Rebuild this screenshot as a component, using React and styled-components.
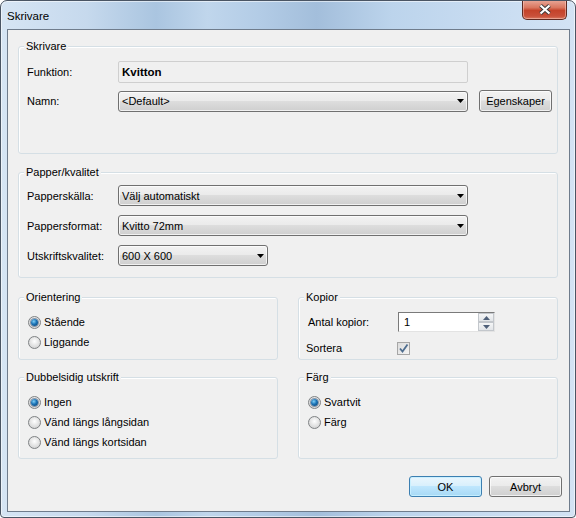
import React from "react";
import styled, { createGlobalStyle } from "styled-components";

const GlobalStyle = createGlobalStyle`
  html, body {
    margin: 0;
    padding: 0;
    background: #ffffff;
  }
  body {
    font-family: "Liberation Sans", Arial, sans-serif;
    font-size: 11px;
    color: #000;
  }
  * {
    box-sizing: border-box;
  }
`;

// Window chrome
const Window = styled.div`
  position: relative;
  width: 576px;
  height: 518px;
  display: flex;
  flex-direction: column;
  border: 1px solid #4a5564;
  border-radius: 7px 7px 4px 4px;
  overflow: hidden;
  background: linear-gradient(
    90deg,
    #d6e5f4 0%,
    #c6d9ed 15%,
    #aac5e0 27%,
    #c0d6ec 36%,
    #b3cce6 45%,
    #a3bedb 55%,
    #bcd4ec 68%,
    #c8dcf1 85%,
    #d3e3f4 100%
  );
  box-shadow: inset 0 0 0 1px rgba(255, 255, 255, 0.55);
`;

const TitleBar = styled.div`
  height: 28px;
  display: flex;
  align-items: center;
  padding: 1px 0 0 6px;
`;

const Title = styled.span`
  font-size: 11.5px;
  color: #000;
`;

const CloseButton = styled.div`
  position: absolute;
  top: -1px;
  right: 8px;
  width: 45px;
  height: 20px;
  border: 1px solid #5e2a22;
  border-top: none;
  border-radius: 0 0 5px 5px;
  background: linear-gradient(
    180deg,
    #e9a99a 0%,
    #d9765f 40%,
    #c4432a 55%,
    #c9503a 85%,
    #d97a60 100%
  );
  box-shadow: inset 0 0 0 1px rgba(255, 220, 210, 0.45);
  display: flex;
  align-items: center;
  justify-content: center;
`;

const Client = styled.div`
  flex: 1;
  margin: 0 5px 5px 6px;
  border: 1px solid #6f7c8c;
  background: #f0f0f0;
  padding: 16px 7px 0 10px;
  display: flex;
  flex-direction: column;
`;

// Group boxes
const Group = styled.div`
  position: relative;
  width: ${(p) => p.$width || 540}px;
  height: ${(p) => p.$height}px;
  margin-top: ${(p) => p.$top || 0}px;
  border: 1px solid #d5dfe5;
  border-radius: 3px;
  box-shadow: inset 1px 1px 0 #ffffff;
  padding: ${(p) => p.$pad || "14px 8px 0 8px"};
`;

const Legend = styled.span`
  position: absolute;
  top: -8px;
  left: 5px;
  padding: 0 2px;
  line-height: 14px;
  background: #f0f0f0;
  color: #000;
`;

const Row = styled.div`
  display: flex;
  gap: 20px;
  margin-top: ${(p) => p.$top || 0}px;
`;

const FormGrid = styled.div`
  display: grid;
  grid-template-columns: ${(p) => p.$cols};
  grid-auto-rows: ${(p) => p.$rowH}px;
  column-gap: ${(p) => p.$colGap || 0}px;
  row-gap: ${(p) => p.$rowGap}px;
  align-items: center;
`;

const Label = styled.span`
  margin-left: ${(p) => p.$indent || 0}px;
  white-space: nowrap;
`;

const ReadOnlyBox = styled.div`
  height: 22px;
  border: 1px solid #cfcfcf;
  border-radius: 2px;
  background: #f0f0f0;
  display: flex;
  align-items: center;
  padding-left: 3px;
  font-weight: bold;
  font-size: 11.5px;
`;

const Combo = styled.div`
  position: relative;
  height: 21px;
  width: ${(p) => p.$width || 350}px;
  border: 1px solid #707070;
  border-radius: 3px;
  background: linear-gradient(
    180deg,
    #f2f2f2 0%,
    #ebebeb 45%,
    #dddddd 50%,
    #cfcfcf 100%
  );
  box-shadow: inset 0 0 0 1px rgba(255, 255, 255, 0.7);
  display: flex;
  align-items: center;
  justify-content: space-between;
  padding: 0 3px 0 3px;
`;

const Arrow = () => (
  <svg width="7" height="4" viewBox="0 0 7 4">
    <polygon points="0,0 7,0 3.5,4" fill="#000" />
  </svg>
);

const PushButton = styled.div`
  width: 73px;
  height: ${(p) => p.$h || 21}px;
  border: 1px solid ${(p) => (p.$default ? "#3c7fb1" : "#707070")};
  border-radius: 3px;
  background: ${(p) =>
    p.$default
      ? "linear-gradient(180deg, #eaf6fd 0%, #d9f0fc 45%, #bee6fd 50%, #a7d9f5 100%)"
      : "linear-gradient(180deg, #f2f2f2 0%, #ebebeb 45%, #dddddd 50%, #cfcfcf 100%)"};
  box-shadow: inset 0 0 0 1px
    ${(p) => (p.$default ? "rgba(200, 240, 255, 0.9)" : "rgba(255, 255, 255, 0.7)")};
  display: flex;
  align-items: center;
  justify-content: center;
`;

const Buttons = styled.div`
  display: flex;
  justify-content: flex-end;
  gap: 7px;
  margin-top: 17px;
`;

// Radio / checkbox / spin
const OptionList = styled.div`
  display: flex;
  flex-direction: column;
`;

const Option = styled.div`
  display: flex;
  align-items: center;
  gap: 3px;
  height: 20px;
`;

const RadioCircle = styled.span`
  position: relative;
  width: 13px;
  height: 13px;
  border-radius: 50%;
  border: 1px solid #7f8284;
  background: radial-gradient(circle at 50% 40%, #ffffff 0%, #e6e6e6 45%, #c9cacb 100%);
  display: flex;
  align-items: center;
  justify-content: center;

  &::after {
    content: "";
    display: ${(p) => (p.$checked ? "block" : "none")};
    width: 7px;
    height: 7px;
    border-radius: 50%;
    background: radial-gradient(circle at 40% 35%, #7fd0f7 0%, #1b72b5 45%, #083c6c 100%);
    box-shadow: 0 0 0 1px rgba(20, 50, 90, 0.45);
  }
`;

const Radio = ({ checked, children }) => (
  <Option>
    <RadioCircle $checked={checked} />
    <span>{children}</span>
  </Option>
);

const SpinBox = styled.div`
  width: 97px;
  height: 20px;
  border: 1px solid;
  border-color: #7a7a7a #e3e3e3 #e3e3e3 #7a7a7a;
  background: #fff;
  display: flex;
  align-items: center;
  justify-content: space-between;
  padding-left: 5px;
`;

const SpinButtons = styled.div`
  display: flex;
  flex-direction: column;
  width: 16px;
  height: 18px;
`;

const SpinHalf = styled.div`
  flex: 1;
  border: 1px solid #c3c7cc;
  background: linear-gradient(180deg, #f5f6f7, #e2e5e8);
  display: flex;
  align-items: center;
  justify-content: center;
`;

const CheckBox = styled.div`
  width: 13px;
  height: 13px;
  margin-left: -1px;
  border: 1px solid #a6a6a6;
  background: linear-gradient(135deg, #dcdcdc, #f4f4f4);
  display: flex;
  align-items: center;
  justify-content: center;
`;

const App = () => {
  return (
    <>
      <GlobalStyle />
      <Window>
        <TitleBar>
          <Title>Skrivare</Title>
        </TitleBar>
        <CloseButton>
          <svg width="14" height="11" viewBox="0 0 14 11">
            <path d="M2.5 1.5 L11.5 9.5 M11.5 1.5 L2.5 9.5" stroke="#3b3b3b" strokeWidth="4" />
            <path d="M2.5 1.5 L11.5 9.5 M11.5 1.5 L2.5 9.5" stroke="#ffffff" strokeWidth="2.2" />
          </svg>
        </CloseButton>
        <Client>
          <Group $height={108}>
            <Legend>Skrivare</Legend>
            <FormGrid $cols="91px 350px 73px" $rowH={22} $rowGap={7} $colGap={0}>
              <Label>Funktion:</Label>
              <ReadOnlyBox>Kvitton</ReadOnlyBox>
              <span />
              <Label>Namn:</Label>
              <Combo>
                <span>&lt;Default&gt;</span>
                <Arrow />
              </Combo>
              <PushButton $h={22} style={{ marginLeft: 11 }}>
                Egenskaper
              </PushButton>
            </FormGrid>
          </Group>

          <Group $height={106} $top={18} $pad="12px 8px 0 8px">
            <Legend>Papper/kvalitet</Legend>
            <FormGrid $cols="91px 350px" $rowH={21} $rowGap={9}>
              <Label>Papperskälla:</Label>
              <Combo>
                <span>Välj automatiskt</span>
                <Arrow />
              </Combo>
              <Label>Pappersformat:</Label>
              <Combo>
                <span>Kvitto 72mm</span>
                <Arrow />
              </Combo>
              <Label>Utskriftskvalitet:</Label>
              <Combo $width={150}>
                <span>600 X 600</span>
                <Arrow />
              </Combo>
            </FormGrid>
          </Group>

          <Row $top={19}>
            <Group $width={260} $height={63} $pad="14px 8px 0 9px">
              <Legend>Orientering</Legend>
              <OptionList>
                <Radio checked>Stående</Radio>
                <Radio>Liggande</Radio>
              </OptionList>
            </Group>
            <Group $width={260} $height={63} $pad="14px 8px 0 7px">
              <Legend>Kopior</Legend>
              <FormGrid $cols="92px 97px" $rowH={20} $rowGap={6}>
                <Label $indent={2}>Antal kopior:</Label>
                <SpinBox>
                  <span>1</span>
                  <SpinButtons>
                    <SpinHalf>
                      <svg width="7" height="4" viewBox="0 0 7 4">
                        <polygon points="0,4 7,4 3.5,0" fill="#4f6079" />
                      </svg>
                    </SpinHalf>
                    <SpinHalf>
                      <svg width="7" height="4" viewBox="0 0 7 4">
                        <polygon points="0,0 7,0 3.5,4" fill="#4f6079" />
                      </svg>
                    </SpinHalf>
                  </SpinButtons>
                </SpinBox>
                <Label>Sortera</Label>
                <CheckBox>
                  <svg width="11" height="11" viewBox="0 0 11 11">
                    <path d="M2 5.5 L4.5 8.5 L9.5 1.5" stroke="#4e6d8f" strokeWidth="1.8" fill="none" />
                  </svg>
                </CheckBox>
              </FormGrid>
            </Group>
          </Row>

          <Row $top={17}>
            <Group $width={260} $height={82} $pad="14px 8px 0 9px">
              <Legend>Dubbelsidig utskrift</Legend>
              <OptionList>
                <Radio checked>Ingen</Radio>
                <Radio>Vänd längs långsidan</Radio>
                <Radio>Vänd längs kortsidan</Radio>
              </OptionList>
            </Group>
            <Group $width={260} $height={82} $pad="14px 8px 0 9px">
              <Legend>Färg</Legend>
              <OptionList>
                <Radio checked>Svartvit</Radio>
                <Radio>Färg</Radio>
              </OptionList>
            </Group>
          </Row>

          <Buttons>
            <PushButton $default>OK</PushButton>
            <PushButton>Avbryt</PushButton>
          </Buttons>
        </Client>
      </Window>
    </>
  );
};

export default App;
